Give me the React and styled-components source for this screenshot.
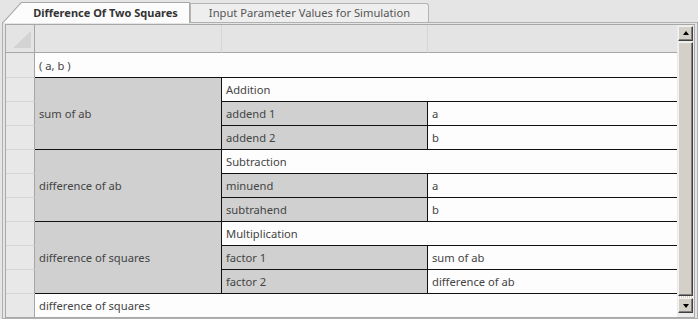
import React from 'react'
import styled, { createGlobalStyle, css } from 'styled-components'

const GlobalStyle = createGlobalStyle`
  html, body {
    margin: 0;
    padding: 0;
    background: #e5e5e5;
  }
  * {
    box-sizing: border-box;
  }
`

const Window = styled.div`
  width: 698px;
  height: 319px;
  overflow: hidden;
  font-family: "Noto Sans", "Open Sans", sans-serif;
  font-size: 11.2px;
  color: #444;
`

const TabBar = styled.div`
  display: flex;
  align-items: flex-end;
  height: 22px;
  padding-left: 2px;
`

const ActiveTab = styled.div`
  position: relative;
  z-index: 1;
  width: 188px;
  height: 21px;
  margin-bottom: -1px;
  display: flex;
  align-items: center;
  justify-content: center;
  padding: 0 0 1px 19px;
  font-size: 11px;
  font-weight: bold;
  color: #333;
  background: #a9a9a9;
  clip-path: polygon(19px 0, 100% 0, 100% 100%, 0 100%);

  &::before {
    content: '';
    position: absolute;
    inset: 0;
    background: #fcfcfc;
    clip-path: polygon(19.6px 1px, calc(100% - 1px) 1px, calc(100% - 1px) 100%, 1.4px 100%);
  }

  span {
    position: relative;
  }
`

const Tab = styled.div`
  width: 239px;
  height: 19px;
  display: flex;
  align-items: center;
  justify-content: center;
  padding-bottom: 1px;
  background: #eeeeee;
  border: 1px solid #b4b4b4;
  border-bottom: none;
  border-top-right-radius: 3px;
  color: #555;
`

const Panel = styled.div`
  margin-left: 2px;
  width: 696px;
  height: 297px;
  border: 1px solid #b0b0b0;
  padding: 1px 2px 0 2px;
`

const Grid = styled.div`
  display: grid;
  grid-template-columns: 29px 186px 206px 250px 17px;
  grid-template-rows: 28px repeat(11, 24px);
  border: 1px solid #a8a8a8;
  background: #e4e4e4;
`

const Corner = styled.div`
  position: relative;
  grid-column: 1;
  grid-row: 1;
  border-right: 1px solid #a6a6a6;
  border-bottom: 1px solid #a6a6a6;

  &::after {
    content: '';
    position: absolute;
    left: 7px;
    right: 3px;
    top: 6px;
    bottom: 4px;
    background: #d3d3d3;
    clip-path: polygon(100% 0, 100% 100%, 0 100%);
  }
`

const HeadCell = styled.div`
  grid-row: 1;
  grid-column: ${p => p.$col};
  border-bottom: 1px solid #a6a6a6;
  ${p => p.$sep && css`border-left: 1px solid #d6d6d6;`}
`

const RowHead = styled.div`
  grid-column: 1;
  grid-row: ${p => p.$row};
  background: #e8e8e8;
  border-right: 1px solid #a6a6a6;
  ${p => p.$row > 2 && css`border-top: 1px solid #d6d6d6;`}
`

const Cell = styled.div`
  display: flex;
  align-items: center;
  padding-left: 4px;
  white-space: nowrap;
  grid-column: ${p => p.$col};
  grid-row: ${p => p.$row};
  background: ${p => (p.$gray ? '#d0d0d0' : '#fdfdfd')};
  ${p => p.$top && css`border-top: 1px solid #111;`}
  ${p => p.$left && css`border-left: 1px solid #111;`}
`

const ScrollBar = styled.div`
  grid-column: 5;
  grid-row: 1 / -1;
  display: flex;
  flex-direction: column;
  padding: 1px 1px 4px 1px;
  background: #ececec;
`

const bevel = css`
  background: #d4d0c8;
  border-top: 1px solid #f4f2ee;
  border-left: 1px solid #f4f2ee;
  border-right: 1px solid #404040;
  border-bottom: 1px solid #404040;
  box-shadow: inset -1px -1px 0 #808080;
`

const ScrollButton = styled.div`
  ${bevel}
  height: 15px;
  display: flex;
  align-items: center;
  justify-content: center;

  &::after {
    content: '';
    width: 0;
    height: 0;
    border-left: 3.5px solid transparent;
    border-right: 3.5px solid transparent;
    ${p => (p.$down
      ? css`border-top: 4px solid #000; margin-top: 1px;`
      : css`border-bottom: 4px solid #000; margin-top: -1px;`)}
  }
`

const Thumb = styled.div`
  ${bevel}
  flex: 1;
  margin-top: 1px;
`

const Track = styled.div`
  height: 2px;
  background-image: repeating-linear-gradient(90deg, #fff 0 1px, #d4d0c8 1px 2px);
`

const blocks = [
  {
    start: 3,
    name: 'sum of ab',
    op: 'Addition',
    params: [['addend 1', 'a'], ['addend 2', 'b']],
  },
  {
    start: 6,
    name: 'difference of ab',
    op: 'Subtraction',
    params: [['minuend', 'a'], ['subtrahend', 'b']],
  },
  {
    start: 9,
    name: 'difference of squares',
    op: 'Multiplication',
    params: [['factor 1', 'sum of ab'], ['factor 2', 'difference of ab']],
  },
]

export default function App() {
  const rows = Array.from({ length: 11 }, (_, i) => i + 2)
  return (
    <Window>
      <GlobalStyle />
      <TabBar>
        <ActiveTab><span>Difference Of Two Squares</span></ActiveTab>
        <Tab>Input Parameter Values for Simulation</Tab>
      </TabBar>
      <Panel>
        <Grid>
          <Corner />
          <HeadCell $col={2} />
          <HeadCell $col={3} $sep />
          <HeadCell $col={4} $sep />
          {rows.map(r => <RowHead key={r} $row={r} />)}

          <Cell $col="2 / span 3" $row={2}>( a, b )</Cell>

          {blocks.map(b => (
            <React.Fragment key={b.start}>
              <Cell $col={2} $row={`${b.start} / span 3`} $gray $top>{b.name}</Cell>
              <Cell $col="3 / span 2" $row={b.start} $top $left>{b.op}</Cell>
              {b.params.map(([label, value], i) => (
                <React.Fragment key={label}>
                  <Cell $col={3} $row={b.start + 1 + i} $gray $top $left>{label}</Cell>
                  <Cell $col={4} $row={b.start + 1 + i} $top $left>{value}</Cell>
                </React.Fragment>
              ))}
            </React.Fragment>
          ))}

          <Cell $col="2 / span 3" $row={12} $top>difference of squares</Cell>

          <ScrollBar>
            <ScrollButton />
            <Thumb />
            <Track />
            <ScrollButton $down />
          </ScrollBar>
        </Grid>
      </Panel>
    </Window>
  )
}
